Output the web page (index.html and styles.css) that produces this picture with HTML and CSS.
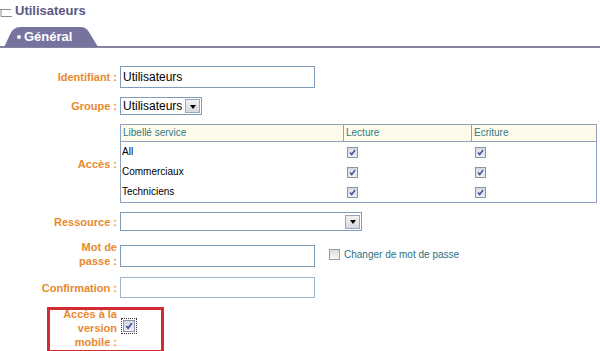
FILE: index.html
```html
<!DOCTYPE html>
<html lang="fr">
<head>
<meta charset="utf-8">
<title>Utilisateurs</title>
<link rel="stylesheet" href="styles.css">
</head>
<body>
<div class="header">
  <svg class="hicon" width="13" height="20" viewBox="0 0 13 20"><path d="M0 7.5H11M1 7.5V14.5M1 14.5H12" stroke="#8a8a95" stroke-width="1" fill="none"/></svg>
  <span class="title">Utilisateurs</span>
</div>
<div class="tabbar">
  <div class="tab"><span class="dot"></span>Général</div>
</div>
<div class="form">
  <div class="label">Identifiant :</div>
  <div class="field"><div class="input">Utilisateurs</div></div>

  <div class="label">Groupe :</div>
  <div class="field"><div class="select sel-groupe"><span class="seltext">Utilisateurs</span><span class="btn"><span class="tri"></span></span></div></div>

  <div class="label">Accès :</div>
  <div class="field">
    <div class="grid">
      <div class="th c1">Libellé service</div>
      <div class="th c2">Lecture</div>
      <div class="th c3">Ecriture</div>
      <div class="td">All</div>
      <div class="td cbcell"><span class="cb on"><svg viewBox="0 0 11 11"><path d="M2.5 5.5L4.5 8L8.5 2.5"/></svg></span></div>
      <div class="td cbcell"><span class="cb on"><svg viewBox="0 0 11 11"><path d="M2.5 5.5L4.5 8L8.5 2.5"/></svg></span></div>
      <div class="td">Commerciaux</div>
      <div class="td cbcell"><span class="cb on"><svg viewBox="0 0 11 11"><path d="M2.5 5.5L4.5 8L8.5 2.5"/></svg></span></div>
      <div class="td cbcell"><span class="cb on"><svg viewBox="0 0 11 11"><path d="M2.5 5.5L4.5 8L8.5 2.5"/></svg></span></div>
      <div class="td">Techniciens</div>
      <div class="td cbcell"><span class="cb on"><svg viewBox="0 0 11 11"><path d="M2.5 5.5L4.5 8L8.5 2.5"/></svg></span></div>
      <div class="td cbcell"><span class="cb on"><svg viewBox="0 0 11 11"><path d="M2.5 5.5L4.5 8L8.5 2.5"/></svg></span></div>
    </div>
  </div>

  <div class="label">Ressource :</div>
  <div class="field"><div class="select sel-res"><span class="seltext"></span><span class="btn"><span class="tri"></span></span></div></div>

  <div class="label">Mot de<br>passe :</div>
  <div class="field row-pass"><div class="input"></div><span class="cb off"></span><span class="chg">Changer de mot de passe</span></div>

  <div class="label">Confirmation :</div>
  <div class="field"><div class="input light"></div></div>

  <div class="label">Accès à la<br>version<br>mobile :</div>
  <div class="field"><span class="focus"><span class="cb on big"><svg viewBox="0 0 11 11"><path d="M2.5 5.5L4.5 8L8.5 2.5"/></svg></span></span></div>
</div>
<div class="highlight"></div>
</body>
</html>
```
FILE: styles.css
```css
html, body {
  margin: 0;
  padding: 0;
  background: #ffffff;
}
body {
  position: relative;
  width: 600px;
  height: 351px;
  overflow: hidden;
  font-family: "Liberation Sans", Arial, sans-serif;
}
.header {
  height: 27px;
  display: flex;
  align-items: flex-start;
  padding-top: 1px;
  box-sizing: border-box;
}
.hicon {
  display: block;
  flex: none;
  margin-top: 1px;
}
.title {
  margin-left: 2px;
  margin-top: 2px;
  font-size: 13px;
  font-weight: bold;
  color: #5b5884;
  line-height: 16px;
}
.tabbar {
  border-bottom: 2px solid #86829f;
  height: 19px;
}
.tab {
  margin-left: 4px;
  width: 94px;
  height: 20px;
  background: #77739f;
  clip-path: path("M0 20 C4 13 6 6 9 3 C11 1 13 0 17 0 L76 0 C81 0 83 2 85 5 L94 20 Z");
  color: #ffffff;
  font-size: 13px;
  font-weight: bold;
  line-height: 20px;
  display: flex;
  align-items: center;
  padding-left: 13px;
  box-sizing: border-box;
}
.dot {
  width: 4px;
  height: 4px;
  border-radius: 50%;
  background: #ffffff;
  margin-right: 3px;
}
.form {
  margin-top: 18px;
  margin-left: 39px;
  display: grid;
  grid-template-columns: 78px 477px;
  column-gap: 3px;
  row-gap: 9px;
  align-items: center;
}
.label {
  text-align: right;
  font-size: 11px;
  font-weight: bold;
  color: #e8892f;
  line-height: 14px;
}
.field {
  display: flex;
  align-items: center;
}
.input {
  width: 195px;
  height: 22px;
  box-sizing: border-box;
  border: 1px solid #7f9db9;
  font-size: 12px;
  line-height: 20px;
  padding-left: 2px;
  color: #000000;
}
.input.light {
  height: 21px;
  border-color: #9fb3cb;
}
.select {
  height: 18px;
  box-sizing: border-box;
  border: 1px solid #7f9db9;
  display: flex;
  align-items: center;
  justify-content: space-between;
  padding: 0 1px 0 2px;
}
.sel-groupe { width: 82px; }
.sel-res { width: 242px; height: 19px; }
.seltext {
  font-size: 12px;
  color: #000000;
  line-height: 16px;
}
.btn {
  width: 15px;
  height: 14px;
  box-sizing: border-box;
  border: 1px solid #9aa6c2;
  background: linear-gradient(#f2f2f5, #d8d8e0);
  display: flex;
  align-items: center;
  justify-content: center;
}
.tri {
  width: 0;
  height: 0;
  border-left: 3.5px solid transparent;
  border-right: 3.5px solid transparent;
  border-top: 4px solid #000000;
  margin-top: 1px;
}
.grid {
  width: 477px;
  box-sizing: border-box;
  border: 1px solid #8ea2c0;
  display: grid;
  grid-template-columns: 222px 128px 125px;
  grid-auto-rows: 20px;
  grid-template-rows: 17px;
}
.th {
  background: #fffbea;
  border-bottom: 1px solid #8ea2c0;
  color: #2d7b8a;
  font-size: 10px;
  line-height: 16px;
  padding-left: 2px;
}
.th.c2, .th.c3 {
  border-left: 1px solid #8ea2c0;
}
.td {
  font-size: 10px;
  color: #000000;
  line-height: 20px;
  padding-left: 1px;
  display: flex;
  align-items: center;
}
.cbcell {
  padding-left: 4px;
}
.cb {
  width: 11px;
  height: 11px;
  box-sizing: border-box;
  display: inline-flex;
  flex: none;
}
.cb.on {
  border: 1px solid #8b93ad;
  background: linear-gradient(#d6d7e0, #eeeef3);
}
.cb.on svg {
  width: 9px;
  height: 9px;
}
.cb.on path {
  fill: none;
  stroke: #2d4b9e;
  stroke-width: 1.7;
}
.cb.off {
  border: 1px solid #9c9c9c;
  background: linear-gradient(#dcdcdc, #f7f7f7);
  margin-left: 14px;
  margin-top: -3px;
}
.chg {
  font-size: 10px;
  color: #2d6f80;
  margin-left: 4px;
  margin-top: -3px;
}
.row-pass {
  padding-top: 4px;
}
.focus {
  display: inline-flex;
  margin-left: 1px;
  margin-top: -4px;
  border: 1px dotted #333333;
  padding: 1px;
}
.cb.big {
  width: 12px;
  height: 12px;
}
.cb.big svg {
  width: 10px;
  height: 10px;
}
.highlight {
  position: absolute;
  left: 47px;
  top: 307px;
  width: 117px;
  height: 46px;
  box-sizing: border-box;
  border: 3px solid #d42a33;
}
```
